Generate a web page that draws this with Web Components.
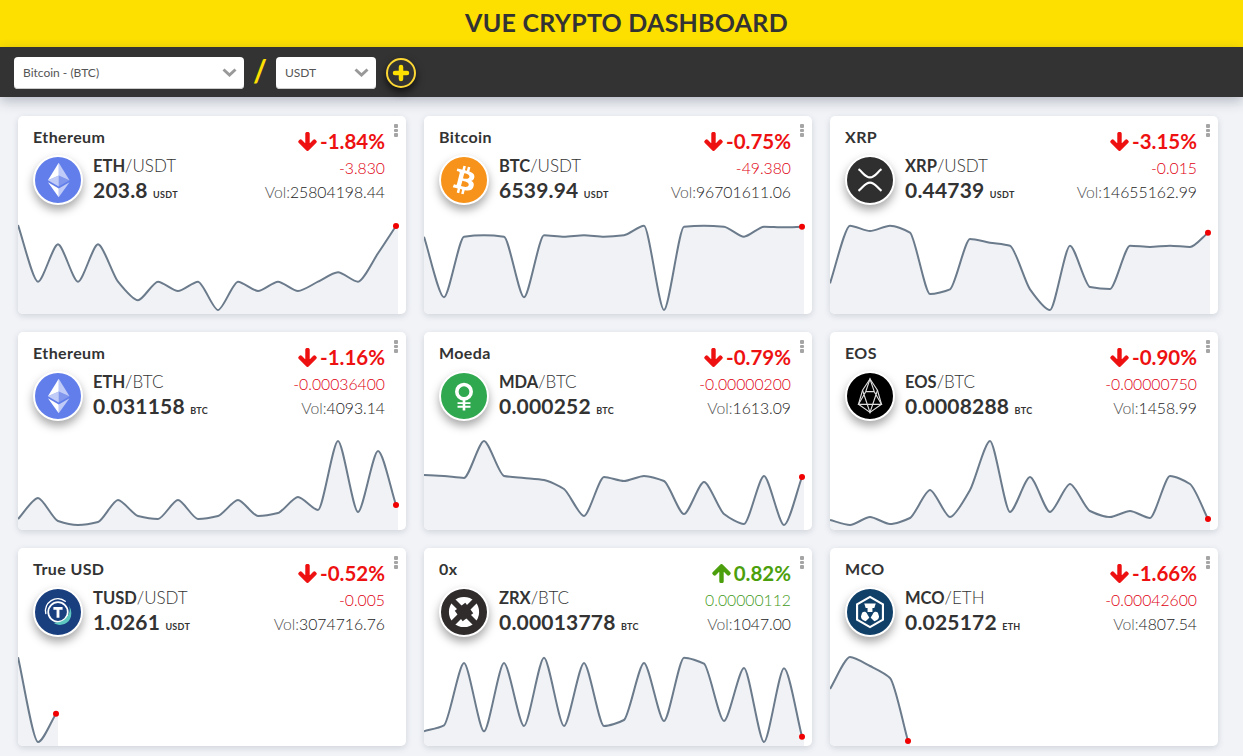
<!DOCTYPE html>
<html lang="en">
<head>
<meta charset="utf-8">
<title>Vue Crypto Dashboard</title>
<style>
  html, body { margin: 0; background: #f1f3f7; font-family: Lato, "Liberation Sans", sans-serif; color: #333; }
</style>
</head>
<body>
<app-header>VUE CRYPTO DASHBOARD</app-header>
<pair-bar>
  <pair-select style="width:230px">Bitcoin - (BTC)</pair-select>
  <pair-select slot="quote" style="width:100px">USDT</pair-select>
</pair-bar>
<card-grid>
  <coin-card name="Ethereum" base="ETH" quote="USDT" price="203.8" unit="USDT" change="-1.84%" delta="-3.830" vol="25804198.44">
    <coin-icon slot="icon" coin="eth"></coin-icon>
    <spark-line slot="chart" ys="9,65.7,28.3,65.7,28.3,65.7,84.3,65.7,75,65.7,94,65.7,75,65.7,75,65.7,56.3,65.7,37.3,10"></spark-line>
  </coin-card>
  <coin-card name="Bitcoin" base="BTC" quote="USDT" price="6539.94" unit="USDT" change="-0.75%" delta="-49.380" vol="96701611.06">
    <coin-icon slot="icon" coin="btc"></coin-icon>
    <spark-line slot="chart" ys="20.7,81.3,20.7,19.3,20.7,81.3,19.3,20.7,19.3,20.7,19.3,9.7,94,10.7,9.7,10.7,20.7,10.7,11.3,10.7"></spark-line>
  </coin-card>
  <coin-card name="XRP" base="XRP" quote="USDT" price="0.44739" unit="USDT" change="-3.15%" delta="-0.015" vol="14655162.99">
    <coin-icon slot="icon" coin="xrp"></coin-icon>
    <spark-line slot="chart" ys="67.3,9.7,15,9.7,16.7,78,73.3,23,26.7,29.7,73.3,94,29.7,71,73,29.7,31,29.7,31,16.7"></spark-line>
  </coin-card>
  <coin-card name="Ethereum" base="ETH" quote="BTC" price="0.031158" unit="BTC" change="-1.16%" delta="-0.00036400" vol="4093.14">
    <coin-icon slot="icon" coin="eth"></coin-icon>
    <spark-line slot="chart" ys="87,66,89,93,90,68,84,87,68,87,84,68,84,81,65,78,9,80,19,73"></spark-line>
  </coin-card>
  <coin-card name="Moeda" base="MDA" quote="BTC" price="0.000252" unit="BTC" change="-0.79%" delta="-0.00000200" vol="1613.09">
    <coin-icon slot="icon" coin="mda"></coin-icon>
    <spark-line slot="chart" ys="43,44,46,9,44,46,48,57,84,45,49,44,49,82,50,82,92,44,93,45"></spark-line>
  </coin-card>
  <coin-card name="EOS" base="EOS" quote="BTC" price="0.0008288" unit="BTC" change="-0.90%" delta="-0.00000750" vol="1458.99">
    <coin-icon slot="icon" coin="eos"></coin-icon>
    <spark-line slot="chart" ys="88,93,85,92,86,58,85,58,9,80,45,80,52,79,85,79,86,44,52,87"></spark-line>
  </coin-card>
  <coin-card name="True USD" base="TUSD" quote="USDT" price="1.0261" unit="USDT" change="-0.52%" delta="-0.005" vol="3074716.76">
    <coin-icon slot="icon" coin="tusd"></coin-icon>
    <spark-line slot="chart" ys="9.3,94,65.7"></spark-line>
  </coin-card>
  <coin-card name="0x" base="ZRX" quote="BTC" price="0.00013778" unit="BTC" change="0.82%" delta="0.00000112" vol="1047.00">
    <coin-icon slot="icon" coin="zrx"></coin-icon>
    <spark-line slot="chart" ys="83.3,77.3,15,83.3,15,78,9.7,78,15,78,72,15,73,9.7,15.7,73,20,94,20.3,88.7"></spark-line>
  </coin-card>
  <coin-card name="MCO" base="MCO" quote="ETH" price="0.025172" unit="ETH" change="-1.66%" delta="-0.00042600" vol="4807.54">
    <coin-icon slot="icon" coin="mco"></coin-icon>
    <spark-line slot="chart" ys="41,9,18,30,93"></spark-line>
  </coin-card>
</card-grid>

<script>
// Custom Element 1: <app-header>
class AppHeader extends HTMLElement {
  constructor() {
    super();
    this.attachShadow({ mode: 'open' });
    this.shadowRoot.innerHTML = `
      <style>
        :host {
          display: block;
          height: 47px;
          padding-left: 10px;
          background-color: #fee000;
          color: #333;
          font: 700 25px/44px Lato, sans-serif;
          letter-spacing: .25px;
          text-align: center;
        }
      </style>
      <slot></slot>
    `;
  }
}
customElements.define('app-header', AppHeader);

// Custom Element 2: <pair-select>
class PairSelect extends HTMLElement {
  constructor() {
    super();
    this.attachShadow({ mode: 'open' });
    this.shadowRoot.innerHTML = `
      <style>
        :host {
          display: flex;
          align-items: center;
          justify-content: space-between;
          box-sizing: border-box;
          height: 32px;
          padding: 0 7px 0 9px;
          background-color: #fff;
          border-radius: 4px;
          box-shadow: inset 0 -1px 0 #ccc;
          color: #555;
          font: 400 12px Lato, sans-serif;
        }
        svg { width: 15px; height: 9px; }
      </style>
      <slot></slot>
      <svg viewBox="0 0 15 9"><path d="M1.5 1.5 7.5 7 13.5 1.5" fill="none" stroke="#999" stroke-width="3"/></svg>
    `;
  }
}
customElements.define('pair-select', PairSelect);

// Custom Element 3: <pair-bar>
class PairBar extends HTMLElement {
  constructor() {
    super();
    this.attachShadow({ mode: 'open' });
    this.shadowRoot.innerHTML = `
      <style>
        :host {
          display: flex;
          align-items: center;
          box-sizing: border-box;
          height: 50px;
          padding: 1px 14px 0;
          background-color: #333;
          box-shadow: 0 4px 12px rgba(40, 50, 70, 0.3);
          position: relative;
        }
        .slash {
          width: 32px;
          height: 32px;
          margin-bottom: 5px;
          text-align: center;
          color: #fee000;
          font: 700 30px/32px Lato, sans-serif;
        }
        button {
          width: 30px;
          height: 30px;
          margin-left: 10px;
          padding: 0;
          display: flex;
          align-items: center;
          justify-content: center;
          background: #333;
          border: 2px solid #fdd835;
          border-radius: 50%;
          box-shadow: 0 4px 8px rgba(0, 0, 0, 0.7);
        }
        svg { width: 18px; height: 18px; }
      </style>
      <slot></slot>
      <span class="slash">/</span>
      <slot name="quote"></slot>
      <button type="button" aria-label="Add">
        <svg viewBox="0 0 18 18"><path d="M9 3v12M3 9h12" stroke="#fee000" stroke-width="4.500" stroke-linecap="round"/></svg>
      </button>
    `;
  }
}
customElements.define('pair-bar', PairBar);

// Custom Element 4: <card-grid>
class CardGrid extends HTMLElement {
  constructor() {
    super();
    this.attachShadow({ mode: 'open' });
    this.shadowRoot.innerHTML = `
      <style>
        :host {
          display: grid;
          grid-template-columns: repeat(3, 388px);
          gap: 18px;
          padding: 19px 0 10px 18px;
        }
      </style>
      <slot></slot>
    `;
  }
}
customElements.define('card-grid', CardGrid);

// Custom Element 5: <coin-icon>
const COIN_ICONS = {
  eth: { bg: '#627eea', art: `
    <g fill="#fff">
      <path fill-opacity=".6" d="M16.5 4v8.87L24 16.22z"/><path d="M16.5 4 9 16.22l7.5-3.35z"/>
      <path fill-opacity=".6" d="M16.5 21.97V28L24 17.62z"/><path d="M16.5 28v-6.03L9 17.62z"/>
      <path fill-opacity=".2" d="M16.5 20.57 24 16.22l-7.5-3.35z"/><path fill-opacity=".6" d="M9 16.22l7.5 4.35v-7.7z"/>
    </g>` },
  btc: { bg: '#f7931a', art: `
    <path fill="#fff" d="M23.189 14.02c.314-2.096-1.283-3.223-3.465-3.975l.708-2.84-1.728-.43-.69 2.765c-.454-.114-.92-.22-1.385-.326l.695-2.783L15.596 6l-.708 2.839c-.376-.086-.746-.17-1.104-.26l.002-.009-2.384-.595-.46 1.846s1.283.294 1.256.312c.7.175.826.638.805 1.006l-.806 3.235c.048.012.11.03.18.057l-.183-.045-1.13 4.532c-.086.212-.303.531-.793.41.018.025-1.256-.313-1.256-.313l-.858 1.978 2.25.561c.418.105.828.215 1.231.318l-.715 2.872 1.727.43.708-2.84c.472.127.93.245 1.378.357l-.706 2.828 1.728.43.715-2.866c2.948.558 5.164.333 6.097-2.333.752-2.146-.037-3.385-1.588-4.192 1.13-.26 1.98-1.003 2.207-2.538zm-3.95 5.538c-.533 2.147-4.148.986-5.32.695l.95-3.805c1.172.293 4.929.872 4.37 3.11zm.535-5.569c-.487 1.953-3.495.96-4.47.717l.86-3.45c.975.243 4.118.696 3.61 2.733z"/>` },
  xrp: { bg: '#2f2f2f', art: `
    <g fill="none" stroke="#fff" stroke-width="1.5">
      <path d="M8 8.500C11 10.500 12.500 14.200 16 14.200S21 10.500 24 8.500"/>
      <path d="M8 23.500C11 21.500 12.500 17.800 16 17.800S21 21.500 24 23.500"/>
    </g>` },
  mda: { bg: '#2fa84f', art: `
    <g fill="none" stroke="#fff">
      <circle cx="16" cy="13" r="5" stroke-width="2.500"/>
      <path d="M16 18v8" stroke-width="1.800"/>
      <path d="M11.500 21h9M11.500 23.500h9" stroke-width="1.300"/>
    </g>` },
  eos: { bg: '#000', art: `
    <g fill="none" stroke="#ddd" stroke-width=".8">
      <path d="M16 4.200 10.800 12 8 21.800 16 27.400l8-5.600L21.200 12z"/>
      <path d="M16 4.200 13 13 8 21.800h16L19 13zM10.800 12 16 27.400 21.200 12M13 13h6"/>
    </g>` },
  tusd: { bg: '#1a3f7f', art: `
    <g fill="none" stroke-linecap="round">
      <path d="M7.500 17A8.500 8.500 0 0 1 21 8.500" stroke="#fff" stroke-width="1"/>
      <circle cx="16" cy="16" r="6.800" stroke="#fff" stroke-width="1.200"/>
      <path d="M23.500 11C26 17 21 24 13 23.500c4 3.500 14 1 12-9z" fill="#5ec8c0"/>
      <path d="M12.800 13.500h6.400M16 13.500v6.500" stroke="#fff" stroke-width="2" stroke-linecap="butt"/>
    </g>` },
  zrx: { bg: '#302c2c', art: `
    <circle cx="16" cy="16" r="10.500" fill="#fff"/>
    <path d="M8 8 24 24M24 8 8 24" stroke="#302c2c" stroke-width="4"/>
    <path d="M16 9.500 22.500 16 16 22.500 9.500 16z" fill="#302c2c" transform="rotate(8 16 16)"/>` },
  mco: { bg: '#103f68', art: `
    <path d="M16 5.500 25 10.700v10.600L16 26.500 7 21.300V10.700z" fill="none" stroke="#fff" stroke-width="1.500"/>
    <g fill="#fff">
      <path d="M12 10h8l-1 3.200h-1.300v2.800h-3.400v-2.800H13z"/>
      <path d="M10.500 16.500c1-1 2.800-.8 3.400.5.500 1.200 1.300 2 1.600 3l-2.500 2.500c-1.800-.5-3.300-1.500-3.300-3.300z"/>
      <path d="M21.500 16.500c-1-1-2.800-.8-3.400.5-.500 1.200-1.300 2-1.600 3l2.500 2.500c1.800-.5 3.300-1.500 3.300-3.300z"/>
    </g>` },
};

class CoinIcon extends HTMLElement {
  constructor() {
    super();
    this.attachShadow({ mode: 'open' });
  }

  connectedCallback() {
    const icon = COIN_ICONS[this.getAttribute('coin')];
    this.shadowRoot.innerHTML = `
      <style>
        :host {
          display: block;
          box-sizing: border-box;
          width: 50px;
          height: 50px;
          border: 2px solid #fff;
          border-radius: 50%;
          background: ${icon.bg};
          box-shadow: 0 5px 10px rgba(0, 0, 0, 0.35);
        }
        svg { display: block; width: 46px; height: 46px; }
      </style>
      <svg viewBox="0 0 32 32">${icon.art}</svg>
    `;
  }
}
customElements.define('coin-icon', CoinIcon);

// Custom Element 6: <spark-line>
class SparkLine extends HTMLElement {
  constructor() {
    super();
    this.attachShadow({ mode: 'open' });
  }

  connectedCallback() {
    const ys = this.getAttribute('ys').split(',').map(Number);
    const pts = ys.map((y, i) => [i * 20, y]);
    pts[pts.length - 1][0] -= 2;
    const last = pts[pts.length - 1];

    // flat tangent on peaks and troughs, harmonic mean of slopes elsewhere (no overshoot)
    const slope = (a, b) => (b[1] - a[1]) / (b[0] - a[0]);
    const tangents = pts.map((p, i) => {
      if (i === 0) return slope(p, pts[1]);
      if (i === pts.length - 1) return slope(pts[i - 1], p);
      const s0 = slope(pts[i - 1], p);
      const s1 = slope(p, pts[i + 1]);
      return s0 * s1 <= 0 ? 0 : 2 * s0 * s1 / (s0 + s1);
    });

    let line = `M${pts[0][0]} ${pts[0][1]}`;
    for (let i = 1; i < pts.length; i++) {
      const h = 5;
      const [x0, y0] = pts[i - 1];
      const [x1, y1] = pts[i];
      line += ` C${x0 + h} ${y0 + tangents[i - 1] * h} ${x1 - h} ${y1 - tangents[i] * h} ${x1} ${y1}`;
    }
    const area = `${line} L${last[0] + 2} ${last[1]} L${last[0] + 2} 98 L0 98 Z`;

    this.shadowRoot.innerHTML = `
      <style>
        :host { display: block; height: 98px; }
        svg { display: block; width: 388px; height: 98px; overflow: visible; }
      </style>
      <svg viewBox="0 0 388 98">
        <path d="${area}" fill="#f0f2f5"/>
        <path d="${line}" fill="none" stroke="#6b7b8c" stroke-width="2"/>
        <circle cx="${last[0]}" cy="${last[1]}" r="3" fill="#f00000"/>
      </svg>
    `;
  }
}
customElements.define('spark-line', SparkLine);

// Custom Element 7: <coin-card>
const ARROW_DOWN = 'M413.1 222.5l22.2 22.2c9.4 9.4 9.4 24.6 0 33.9L241 473c-9.4 9.4-24.6 9.4-33.9 0L12.7 278.6c-9.4-9.4-9.4-24.6 0-33.9l22.2-22.2c9.5-9.5 25-9.3 34.3.4L184 343.4V56c0-13.3 10.7-24 24-24h32c13.3 0 24 10.7 24 24v287.4l114.8-120.5c9.3-9.8 24.8-10 34.3-.4z';
const ARROW_UP = 'M34.9 289.5l-22.2-22.2c-9.4-9.4-9.4-24.6 0-33.9L207 39c9.4-9.4 24.6-9.4 33.9 0l194.3 194.3c9.4 9.4 9.4 24.6 0 33.9L413 289.4c-9.5 9.5-25 9.3-34.3-.4L264 168.6V456c0 13.3-10.7 24-24 24h-32c-13.3 0-24-10.7-24-24V168.6L69.2 289.1c-9.3 9.8-24.8 10-34.3.4z';

class CoinCard extends HTMLElement {
  constructor() {
    super();
    this.attachShadow({ mode: 'open' });
  }

  connectedCallback() {
    const a = (n) => this.getAttribute(n);
    const up = !a('change').startsWith('-');
    this.shadowRoot.innerHTML = `
      <style>
        :host {
          display: flex;
          flex-direction: column;
          height: 198px;
          position: relative;
          background-color: #fff;
          border-radius: 5px;
          box-shadow: 0 2px 6px rgba(60, 70, 90, 0.18);
          overflow: hidden;
          --trend: ${up ? '#4c9f0c' : '#ee1111'};
          --trend-light: ${up ? '#3f9a1a' : '#e00010'};
        }
        .top {
          display: flex;
          justify-content: space-between;
          height: 100px;
          box-sizing: border-box;
          padding: 11px 21px 0 15px;
        }
        .name { font-weight: 700; font-size: 16px; line-height: 20px; height: 28px; color: #333; letter-spacing: .4px; }
        .coin { display: flex; gap: 10px; }
        .pair { font-size: 17px; line-height: 20px; font-weight: 300; color: #333; padding-top: 1px; }
        .pair b { font-weight: 700; font-size: 16.500px; }
        .price { font-size: 21px; font-weight: 700; line-height: 26px; margin-top: 1px; color: #333; letter-spacing: .2px; }
        .unit { font-size: 9px; font-weight: 700; letter-spacing: .3px; }
        .right { text-align: right; padding-top: 2px; }
        .change {
          display: flex;
          justify-content: flex-end;
          align-items: center;
          gap: 3px;
          color: var(--trend);
          font-size: 20.500px;
          font-weight: 700;
          line-height: 24px;
        }
        .change svg { width: 19px; height: 19px; fill: var(--trend); stroke: var(--trend); stroke-width: 30; }
        .delta { color: var(--trend-light); font-size: 15.750px; font-weight: 300; line-height: 22px; margin-top: 4px; }
        .vol { color: #222; font-size: 15.750px; font-weight: 300; line-height: 22px; margin-top: 2px; }
        .vol span { color: #555; }
        .menu { position: absolute; top: 8px; right: 8px; width: 4px; display: flex; flex-direction: column; gap: 1px; }
        .menu i { display: block; width: 4px; height: 3.500px; background: #a5a5a5; border-radius: 1px; }
      </style>
      <div class="top">
        <div>
          <div class="name">${a('name')}</div>
          <div class="coin">
            <slot name="icon"></slot>
            <div>
              <div class="pair"><b>${a('base')}</b>/${a('quote')}</div>
              <div class="price">${a('price')} <span class="unit">${a('unit')}</span></div>
            </div>
          </div>
        </div>
        <div class="right">
          <div class="change">
            <svg viewBox="-10 17 468 478"><path d="${up ? ARROW_UP : ARROW_DOWN}"/></svg>
            <span>${a('change')}</span>
          </div>
          <div class="delta">${a('delta')}</div>
          <div class="vol"><span>Vol:</span>${a('vol')}</div>
        </div>
      </div>
      <slot name="chart"></slot>
      <div class="menu"><i></i><i></i><i></i></div>
    `;
  }
}
customElements.define('coin-card', CoinCard);
</script>
</body>
</html>
